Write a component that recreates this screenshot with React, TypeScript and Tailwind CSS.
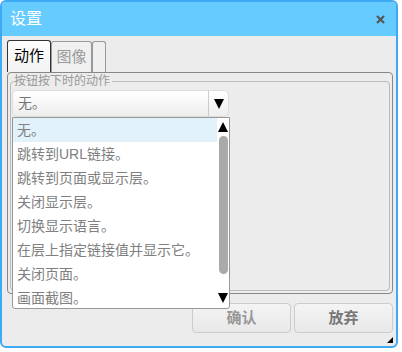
import React from 'react'

const font = { fontFamily: '"Liberation Sans", "Noto Sans CJK SC", sans-serif' }

const items = [
  '无。',
  '跳转到URL链接。',
  '跳转到页面或显示层。',
  '关闭显示层。',
  '切换显示语言。',
  '在层上指定链接值并显示它。',
  '关闭页面。',
  '画面截图。',
]

const Tri = ({ up }: { up?: boolean }) => (
  <svg width="10" height="10" viewBox="0 0 10 10">
    <polygon points={up ? '5,0 10,10 0,10' : '0,0 10,0 5,10'} fill="#000" />
  </svg>
)

const App = () => {
  return (
    <div className="bg-white w-[402px] h-[352px]" style={font}>
      <div className="w-[398px] h-[348px] border-2 border-[#3ea9f5] rounded-[6px] bg-[#ececec] flex flex-col overflow-hidden">
        <div className="h-[34px] shrink-0 bg-[#66ccff] flex items-center justify-between pl-[8px] pr-[11px]">
          <span className="text-white text-[16px] leading-none">设置</span>
          <svg width="9" height="9" viewBox="0 0 9 9">
            <path d="M1 1L8 8M8 1L1 8" stroke="#555" strokeWidth="2.2" />
          </svg>
        </div>

        <div className="flex flex-col pl-[5px] pr-[2px] pt-[4px]">
          <div className="flex items-end h-[32px]">
            <div className="h-[32px] w-[44px] border border-b-0 border-[#333] rounded-t-[3px] bg-gradient-to-b from-white to-[#f2f2f2] flex items-center justify-center text-[15px] text-black">
              动作
            </div>
            <div className="h-[31px] w-[41px] border border-b-0 border-[#999] rounded-t-[3px] bg-[#f0f0f0] flex items-center justify-center text-[15px] text-[#999]">
              图像
            </div>
            <div className="h-[31px] w-[14px] border border-b-0 border-[#999] rounded-t-[3px] bg-[#efefef]"></div>
          </div>

          <div className="h-[222px] w-[386px] border border-[#888] rounded-[4px] px-[2px] pt-[2px]">
            <fieldset className="relative h-[216px] border border-[#bbb] rounded-[4px] px-[1px]">
              <legend className="text-[12px] text-[#999] leading-[12px] ml-[2px] pr-[2px]">按钮按下时的动作</legend>
              <div className="mt-[3px] w-[217px] h-[27px] border border-[#ddd] rounded-[5px] bg-gradient-to-b from-white to-[#eee] flex">
                <div className="flex-1 flex items-center pl-[5px] text-[14px] text-[#777]">无。</div>
                <div className="w-[20px] border-l border-[#ccc] flex items-center justify-center">
                  <Tri />
                </div>
              </div>
              <div className="absolute left-[1px] top-[30px] w-[218px] h-[192px] border border-[#999] rounded-b-[3px] bg-white flex z-10">
                <div className="flex-1 flex flex-col">
                  {items.map((t, i) => (
                    <div
                      key={t}
                      className={`h-[24px] shrink-0 flex items-center pl-[4px] text-[14px] text-[#808080] ${i === 0 ? 'bg-[#e2f2fb]' : ''}`}
                    >
                      {t}
                    </div>
                  ))}
                </div>
                <div className="w-[12px] flex flex-col items-center pt-[4px] pb-[5px]">
                  <Tri up />
                  <div className="w-[9px] h-[138px] mt-[4px] rounded-full bg-[#aaa]"></div>
                  <div className="flex-1"></div>
                  <Tri />
                </div>
              </div>
            </fieldset>
          </div>

          <div className="flex justify-end gap-[3px] mt-[9px] pr-[1px]">
            <div className="w-[99px] h-[30px] border border-[#ccc] rounded-[4px] bg-gradient-to-b from-[#f4f4f4] to-[#e8e8e8] flex items-center justify-center text-[15px] font-bold text-[#999]">
              确认
            </div>
            <div className="w-[99px] h-[30px] border border-[#ccc] rounded-[4px] bg-gradient-to-b from-[#f4f4f4] to-[#e8e8e8] flex items-center justify-center text-[15px] font-bold text-[#777]">
              放弃
            </div>
          </div>
          <div className="flex justify-end pr-[1px] mt-[4px]">
            <svg width="6" height="6" viewBox="0 0 6 6">
              <polygon points="6,0 6,6 0,6" fill="#000" />
            </svg>
          </div>
        </div>
      </div>
    </div>
  )
}

export default App
